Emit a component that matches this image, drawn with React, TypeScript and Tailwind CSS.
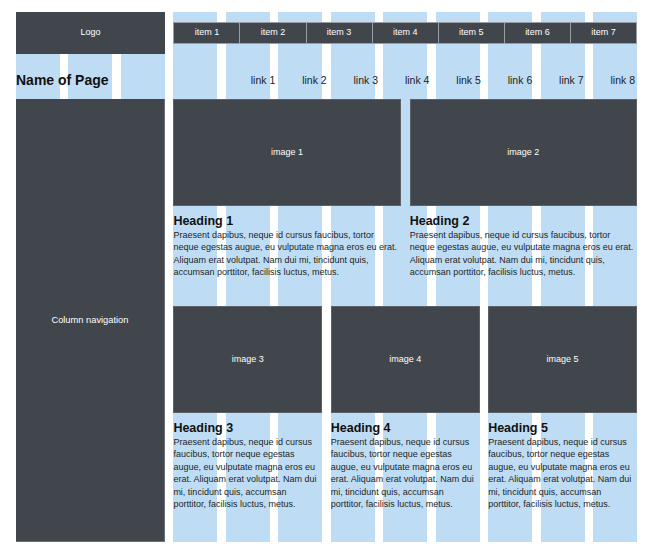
const items = ["item 1", "item 2", "item 3", "item 4", "item 5", "item 6", "item 7"];
const links = ["link 1", "link 2", "link 3", "link 4", "link 5", "link 6", "link 7", "link 8"];

const copy =
  "Praesent dapibus, neque id cursus faucibus, tortor neque egestas augue, eu vulputate magna eros eu erat. Aliquam erat volutpat. Nam dui mi, tincidunt quis, accumsan porttitor, facilisis luctus, metus.";

function Card({ n }: { n: number }) {
  return (
    <div className="flex flex-col">
      <div className="h-[107px] bg-[#41464d] border border-[#5d6269] flex items-center justify-center text-[9px] text-white">
        image {n}
      </div>
      <h2 className="mt-[9px] text-[12.5px] leading-[13px] font-bold text-[#111]">Heading {n}</h2>
      <p className="mt-[1px] pr-[2px] text-[9px] leading-[12.4px] text-[#1f1f1f]">{copy}</p>
    </div>
  );
}

export default function App() {
  return (
    <div className="w-[650px] h-[553px] bg-white pt-[12px] pl-[16px] font-['Liberation_Sans',Arial,sans-serif]">
      <div className="w-[621px] h-[530px] grid grid-cols-12 gap-x-[8.5px] bg-[repeating-linear-gradient(90deg,#bedcf3_0_43.96px,transparent_43.96px_52.46px)]">
        {/* left column */}
        <div className="col-span-3 flex flex-col">
          <div className="h-[42px] bg-[#41464d] flex items-center justify-center text-[9px] text-white">Logo</div>
          <div className="h-[45px] flex items-center pt-[7px]">
            <h1 className="text-[14px] font-bold text-[#111]">Name of Page</h1>
          </div>
          <div className="flex-1 bg-[#41464d] border-r border-b border-[#6a6f76] flex items-center justify-center pt-[2px] text-[9.3px] text-white">
            Column navigation
          </div>
        </div>

        {/* right column */}
        <div className="col-span-9 flex flex-col pt-[10px]">
          <div className="h-[22px] flex bg-[#41464d] border border-[#9a9ea4]">
            {items.map((it, i) => (
              <div
                key={it}
                className={`flex-1 flex items-center justify-center text-[9px] text-white ${i > 0 ? "border-l border-[#9a9ea4]" : ""}`}
              >
                {it}
              </div>
            ))}
          </div>
          <div className="h-[55px] flex justify-end items-center pt-[18px] pr-[2px]">
            {links.map((l) => (
              <span key={l} className="w-[51.4px] text-right text-[10.5px] text-[#222]">
                {l}
              </span>
            ))}
          </div>
          <div className="h-[207px] grid grid-cols-2 gap-x-[9px]">
            <Card n={1} />
            <Card n={2} />
          </div>
          <div className="grid grid-cols-3 gap-x-[8.5px]">
            <Card n={3} />
            <Card n={4} />
            <Card n={5} />
          </div>
        </div>
      </div>
    </div>
  );
}
